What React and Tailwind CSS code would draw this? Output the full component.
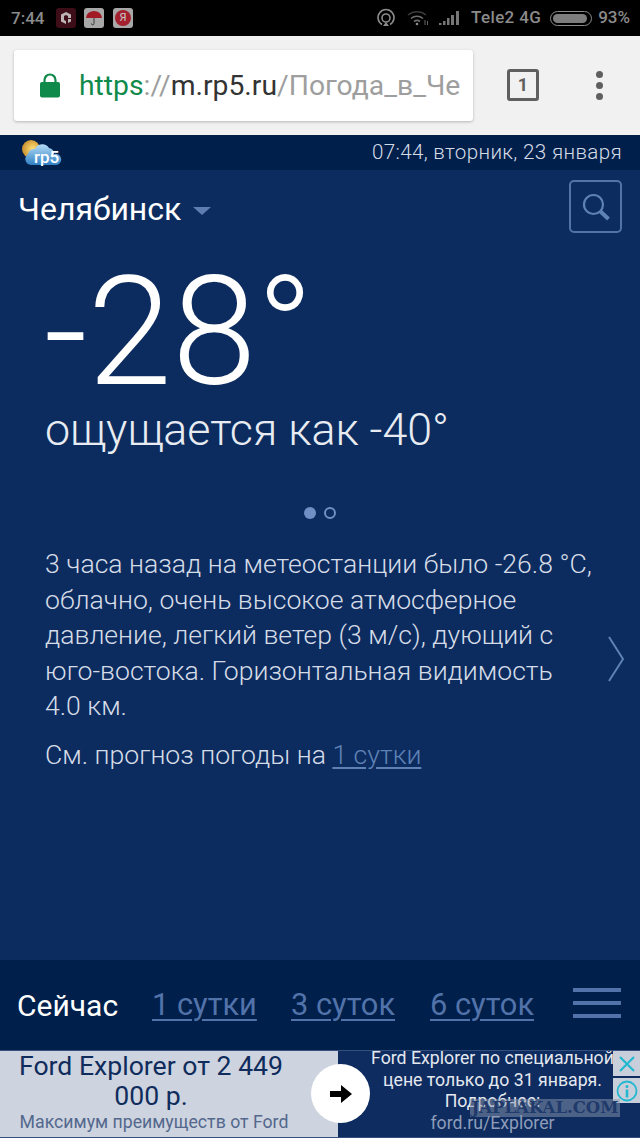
import React from "react";

function StatusBar() {
  return (
    <div className="h-[36px] bg-black flex items-center pl-[11px] pr-[10px] text-[#8b8b8b] text-[17px] font-medium shrink-0">
      <span className="w-[35px] leading-[36px]">7:44</span>
      <div className="ml-[10px] w-[20px] h-[20px] rounded-[3px] bg-[#3d0d18] flex items-center justify-center">
        <svg width="14" height="14" viewBox="0 0 14 14"><path d="M7 1l5 2.5v3.5H9V5L7 4 5 5v4l2 1v3L2 10.5v-7z" fill="#bdb5b5"/><path d="M12 8v2.5L9 12V8z" fill="#bdb5b5"/></svg>
      </div>
      <div className="ml-[8px] w-[20px] h-[20px] rounded-[3px] bg-[#a8a8a8] flex items-center justify-center">
        <svg width="18" height="18" viewBox="0 0 18 18"><path d="M1 9a8 7 0 0 1 16 0z" fill="#a11a26"/><path d="M9 9v5.5a1.3 1.3 0 0 1-2.6 0" stroke="#3a3a3a" strokeWidth="1" fill="none"/></svg>
      </div>
      <div className="ml-[9px] w-[20px] h-[20px] rounded-[3px] bg-[#a8a8a8] flex items-center justify-center">
        <div className="w-[16px] h-[16px] rounded-full bg-[#a3202e] text-[#c9c9c9] text-[11px] leading-[16px] text-center font-normal">Я</div>
      </div>
      <div className="flex-1" />
      <svg width="20" height="20" viewBox="0 0 20 20" fill="none" stroke="#8b8b8b" strokeWidth="1.6"><path d="M6 16.5a8 8 0 1 1 8 0"/><circle cx="10" cy="10" r="4"/><path d="M7 18l3-4 3 4z" fill="#8b8b8b" stroke="none"/></svg>
      <svg className="ml-[11px]" width="22" height="18" viewBox="0 0 22 18" fill="none" stroke="#6e6e6e" strokeWidth="1.6"><path d="M1 6a14 14 0 0 1 18 0" stroke="#3a3a3a"/><path d="M4 9.5a9 9 0 0 1 12 0"/><path d="M7 12.5a5 5 0 0 1 6 0" /><circle cx="10" cy="15" r="1.3" fill="#8b8b8b" stroke="none"/><path d="M18 11v5M20.5 12v4" stroke="#666" strokeWidth="1"/></svg>
      <svg className="ml-[10px]" width="22" height="16" viewBox="0 0 22 16" fill="#777"><rect x="0" y="13" width="2.5" height="2"/><rect x="4" y="11" width="2.5" height="4"/><rect x="8" y="8" width="2.5" height="7"/><rect x="12" y="5" width="3" height="10"/><rect x="17" y="1" width="3" height="14"/></svg>
      <span className="ml-[10px] whitespace-nowrap tracking-[0.35px]">Tele2 4G</span>
      <div className="ml-[9px] w-[42px] h-[15px] rounded-full border border-[#8b8b8b] p-[2px] shrink-0">
        <div className="w-[34px] h-full rounded-full bg-[#7d7d7d]" />
      </div>
      <span className="ml-[6px]">93%</span>
    </div>
  );
}

function ChromeBar() {
  return (
    <div className="h-[99px] bg-[#f1f1f1] flex items-start pl-[14px] pt-[14px] shrink-0">
      <div className="w-[459px] h-[71px] bg-white rounded-[3px] shadow-[0_1px_3px_rgba(0,0,0,0.25)] flex items-center pl-[26px] overflow-hidden">
        <svg width="20" height="25" viewBox="0 0 20 25" className="shrink-0 mt-[-1px]"><path d="M4.5 10V7a5.5 5.5 0 0 1 11 0v3" fill="none" stroke="#0f8a4b" strokeWidth="2.2"/><rect x="0" y="9" width="20" height="15.5" rx="2" fill="#0f8a4b"/></svg>
        <div className="ml-[19px] whitespace-nowrap text-[28.3px] leading-[71px]">
          <span className="text-[#0f8a4b]">https</span>
          <span className="text-[#9e9e9e]">://</span>
          <span className="text-[#333333]">m.rp5.ru</span>
          <span className="text-[#9e9e9e]">/Погода_в_Че</span>
        </div>
      </div>
      <div className="ml-[34px] mt-[19px] w-[32px] h-[32px] rounded-[3px] border-[3px] border-[#5f5f5f] flex items-center justify-center text-[#5f5f5f] text-[18px] font-bold leading-none">1</div>
      <div className="ml-[57px] mt-[21px] flex flex-col gap-[4px]">
        <div className="w-[7px] h-[7px] rounded-full bg-[#5f5f5f]" />
        <div className="w-[7px] h-[7px] rounded-full bg-[#5f5f5f]" />
        <div className="w-[7px] h-[7px] rounded-full bg-[#5f5f5f]" />
      </div>
    </div>
  );
}

function Logo() {
  return (
    <svg width="42" height="30" viewBox="0 0 42 30" className="mt-[1px]">
      <defs>
        <radialGradient id="sun" cx="0.6" cy="0.5" r="0.6"><stop offset="0" stopColor="#ffe27a"/><stop offset="1" stopColor="#c98f2c"/></radialGradient>
        <linearGradient id="cloud" x1="0" y1="0" x2="0" y2="1"><stop offset="0" stopColor="#b4dcf5"/><stop offset="1" stopColor="#2f7fc4"/></linearGradient>
      </defs>
      <circle cx="11" cy="11" r="9" fill="url(#sun)"/>
      <path d="M11 27a6 6 0 0 1-3-11 6 6 0 0 1 7-5 8 8 0 0 1 14-1 6 6 0 0 1 5 6 5.500 5.500 0 0 1 3 11z" fill="url(#cloud)"/>
      <text x="14" y="24.500" fontSize="17" fontWeight="500" fill="#ffffff" style={{ fontFamily: "Roboto" }}>rp5</text>
    </svg>
  );
}

function Ad() {
  return (
    <div className="relative h-[88px] flex shrink-0 border-t border-t-[#33507f] overflow-hidden">
      <div className="w-[338px] bg-[#cdd3df] text-center pr-[36px] border-b border-b-[#33507f]">
        <div className="text-[#0f2c5c] text-[26.6px] leading-[30px] whitespace-nowrap">Ford Explorer от 2 449<br />000 р.</div>
        <div className="text-[#53688c] text-[17.7px] leading-[22px] whitespace-nowrap pl-[6px]">Максимум преимуществ от Ford</div>
      </div>
      <div className="flex-1 bg-[#0e2c60] pl-[7px] text-center text-[#e4e8ef] text-[17.7px] leading-[21.5px] border-b border-b-[#33507f]">
        <div className="whitespace-nowrap mt-[-3px]">Ford Explorer по специальной</div>
        <div className="whitespace-nowrap">цене только до 31 января.</div>
        <div>Подробнее:</div>
        <div className="text-[#8e9db8]">ford.ru/Explorer</div>
      </div>
      <div className="absolute left-[311px] top-[13px] w-[59px] h-[59px] rounded-full bg-white flex items-center justify-center">
        <svg width="22" height="18" viewBox="0 0 22 18"><path d="M0 6h11V0l11 9-11 9v-6H0z" fill="#000"/></svg>
      </div>
      <div className="absolute right-0 top-0 w-[27px] h-[25px] bg-[#c9cedb] flex items-center justify-center">
        <svg width="18" height="18" viewBox="0 0 18 18" stroke="#22b8cf" strokeWidth="2.2"><path d="M2 2l14 14M16 2L2 16"/></svg>
      </div>
      <div className="absolute right-0 top-[27px] w-[27px] h-[25px] bg-[#c9cedb] flex items-center justify-center">
        <svg width="22" height="22" viewBox="0 0 22 22" fill="none"><circle cx="11" cy="11" r="9.5" stroke="#22b8cf" strokeWidth="1.8"/><circle cx="11" cy="6.5" r="1.5" fill="#22b8cf"/><rect x="9.7" y="9.5" width="2.6" height="8" fill="#22b8cf"/></svg>
      </div>
      <div className="absolute left-[470px] top-[48px] w-[150px] h-[18px] bg-[#8a97ad]/50 flex items-center justify-center text-[#1f3a6b] text-[16.5px] font-black leading-none whitespace-nowrap" style={{ fontFamily: "'DejaVu Serif', serif" }}>JAPLAKAL.COM</div>
    </div>
  );
}

export default function App() {
  return (
    <div className="w-[640px] h-[1138px] flex flex-col overflow-hidden bg-[#0c2c5f]" style={{ fontFamily: "Roboto, sans-serif" }}>
      <StatusBar />
      <ChromeBar />
      <div className="h-[35px] bg-[#011f4b] flex items-center justify-between pl-[20px] pr-[18px] shrink-0">
        <Logo />
        <span className="text-[#d5dbe6] text-[20.6px] font-light tracking-[0.35px]">07:44, вторник, 23 января</span>
      </div>
      <main className="flex-1 relative bg-[#0c2c5f] pt-[10px]">
        <div className="flex items-start justify-between pl-[18px] pr-[18px]">
          <div className="flex items-center h-[52px] mt-[3px]">
            <span className="text-white text-[32px]">Челябинск</span>
            <div className="ml-[12px] mt-[4px] w-0 h-0 border-l-[9px] border-r-[9px] border-t-[8px] border-l-transparent border-r-transparent border-t-[#5f7db0]" />
          </div>
          <div className="w-[53px] h-[53px] rounded-[5px] border-[2px] border-[#5173a8] flex items-center justify-center">
            <svg width="30" height="30" viewBox="0 0 30 30" fill="none" stroke="#5f82b5"><circle cx="12.5" cy="12.5" r="9.5" strokeWidth="2.2"/><path d="M19.500 19.500l8 7.500" strokeWidth="4"/></svg>
          </div>
        </div>
        <div className="pl-[44px] text-white text-[152px] font-light leading-[154px] mt-[20px] whitespace-nowrap">-28°</div>
        <div className="pl-[45px] text-[#e8ecf2] text-[44.8px] font-light leading-[54px] mt-[-6px] whitespace-nowrap">ощущается как -40°</div>
        <div className="flex justify-center gap-[8px] mt-[49px] h-[14px] items-center">
          <div className="w-[12px] h-[12px] rounded-full bg-[#6f8fc5]" />
          <div className="w-[12px] h-[12px] rounded-full border-[2px] border-[#6f8fc5]" />
        </div>
        <div className="pl-[45px] pr-[40px] mt-[26px] text-[#d6dce7] text-[26.6px] font-light leading-[35.5px]">
          3 часа назад на метеостанции было -26.8 °C, облачно, очень высокое атмосферное давление, легкий ветер (3 м/с), дующий с юго-востока. Горизонтальная видимость 4.0{"\u00A0"}км.
        </div>
        <div className="pl-[45px] mt-[13px] text-[#d6dce7] text-[26.6px] font-light leading-[35.5px] whitespace-nowrap">
          См. прогноз погоды на <span className="text-[#5f82b5] underline underline-offset-[3px]">1 сутки</span>
        </div>
        <svg className="absolute left-[606px] top-[466px]" width="20" height="46" viewBox="0 0 20 46" fill="none" stroke="#5f82b5" strokeWidth="2"><path d="M3 1l14 22L3 45"/></svg>
      </main>
      <nav className="h-[90px] bg-[#011f4b] flex items-center pl-[17px] shrink-0">
        <span className="text-white text-[30px] w-[135px]">Сейчас</span>
        <span className="text-[#5273a9] text-[30.800px] underline decoration-[1.5px] underline-offset-[4px] w-[139px]">1 сутки</span>
        <span className="text-[#5273a9] text-[30.800px] underline decoration-[1.5px] underline-offset-[4px] w-[139px]">3 суток</span>
        <span className="text-[#5273a9] text-[30.800px] underline decoration-[1.5px] underline-offset-[4px] w-[143px]">6 суток</span>
        <div className="w-[48px] flex flex-col gap-[9px] mt-[-4px]">
          <div className="h-[4px] bg-[#5273a9]" />
          <div className="h-[4px] bg-[#5273a9]" />
          <div className="h-[4px] bg-[#5273a9]" />
        </div>
      </nav>
      <Ad />
    </div>
  );
}
